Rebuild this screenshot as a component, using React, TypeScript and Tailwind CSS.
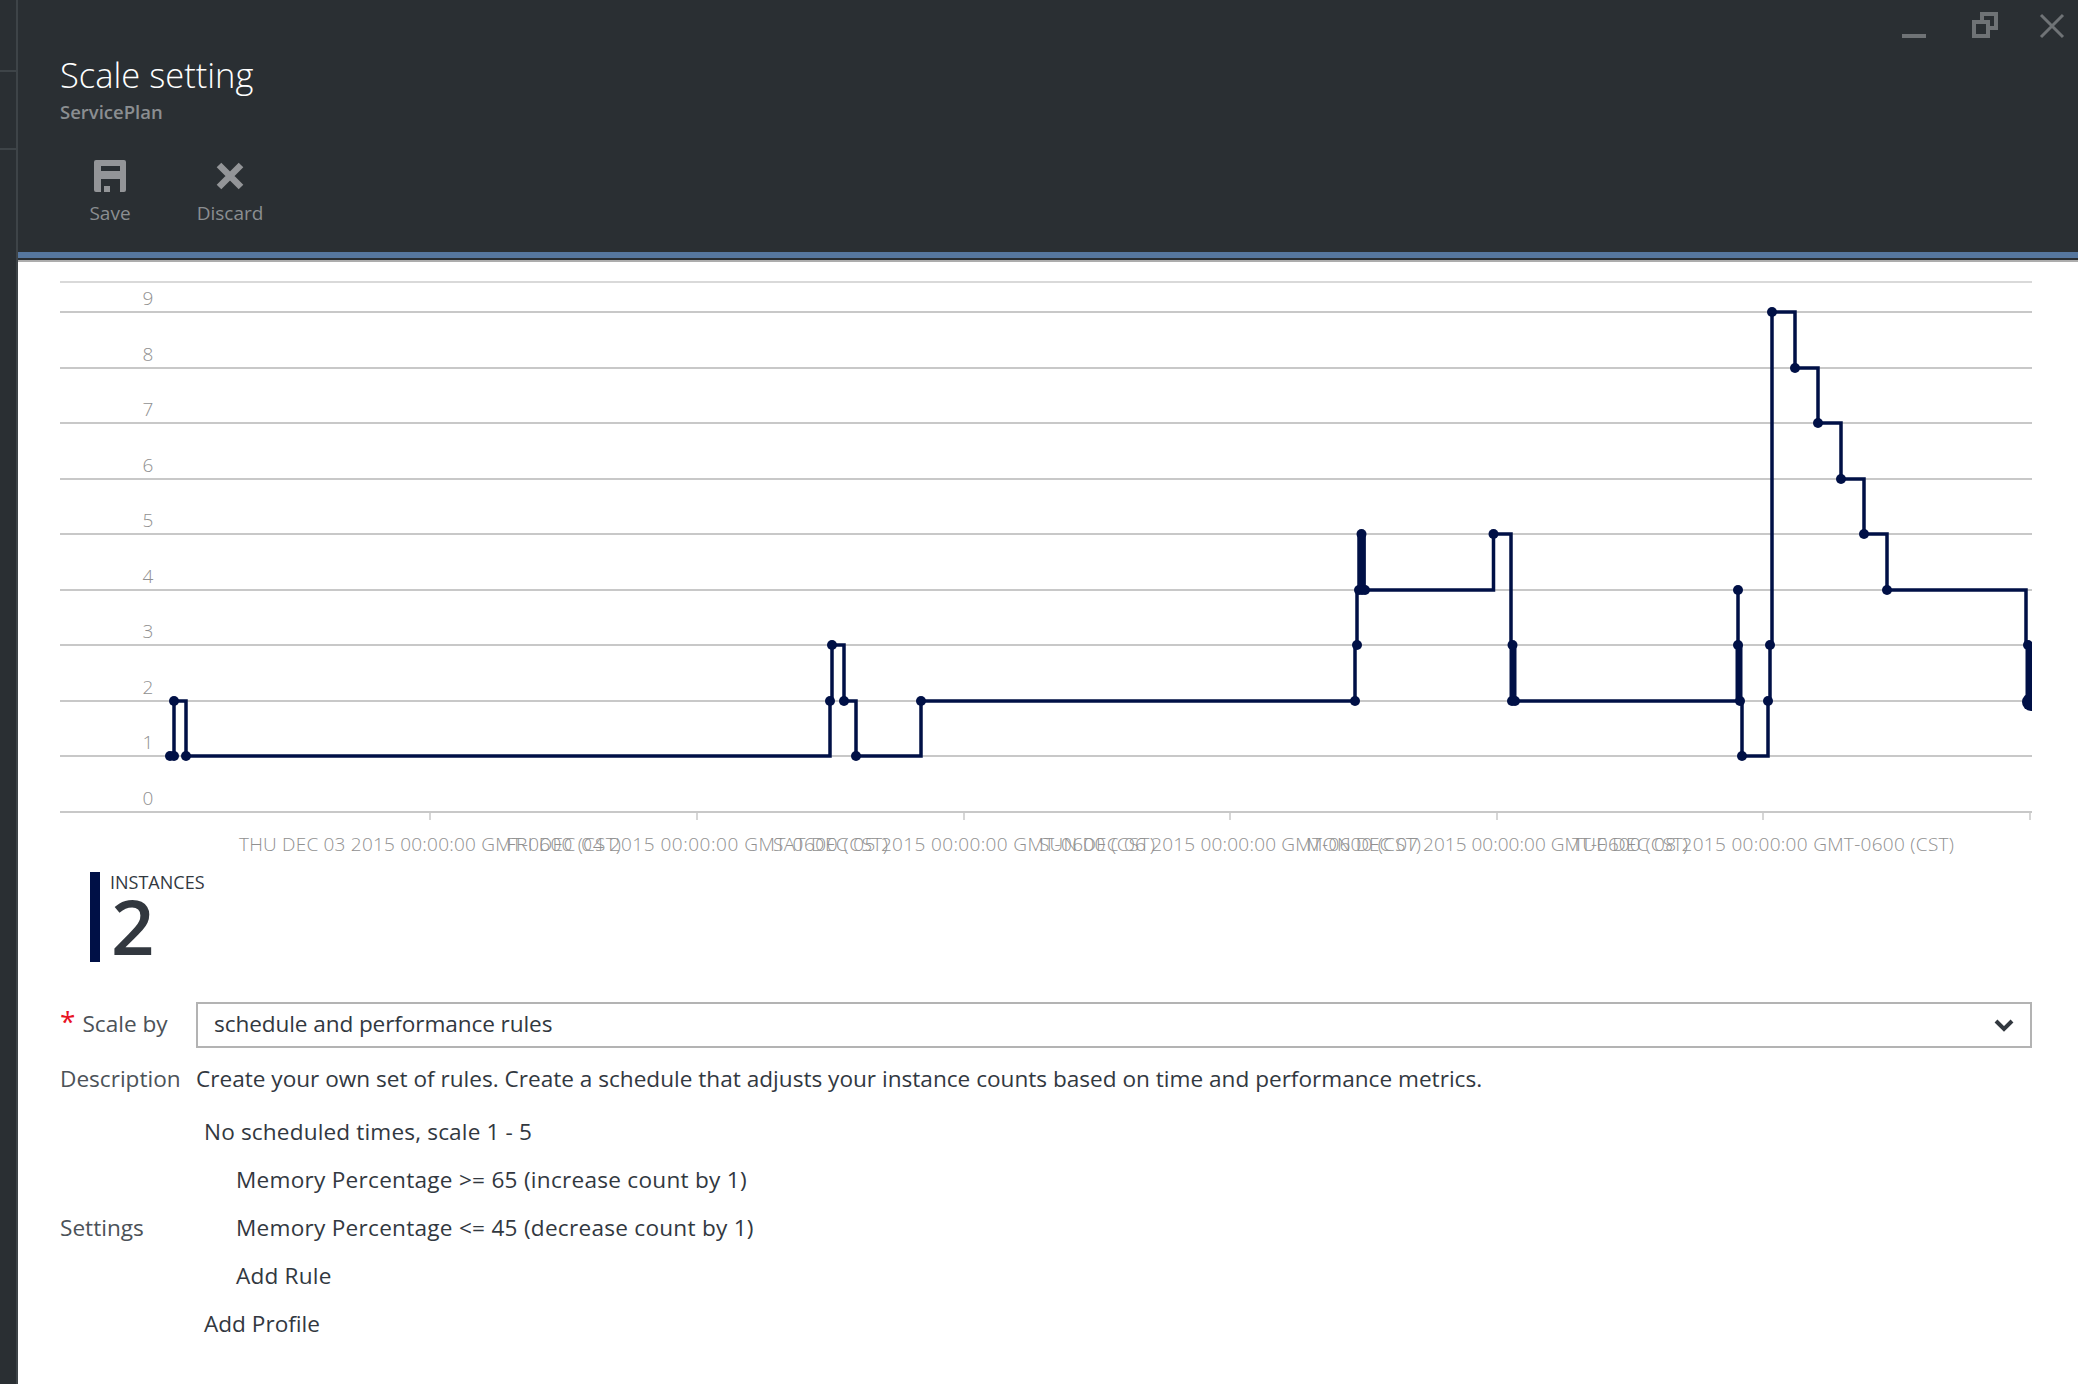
import React from 'react';

const NAVY = '#001046';
const GRID_Y = [312, 368, 423, 479, 534, 590, 645, 701, 756, 812];
const Y_LABELS = ['9', '8', '7', '6', '5', '4', '3', '2', '1', '0'];
const TICKS = [430, 697, 964, 1230, 1497, 1763, 2030];
const DATES = ['THU DEC 03', 'FRI DEC 04', 'SAT DEC 05', 'SUN DEC 06', 'MON DEC 07', 'TUE DEC 08'];

const LINE =
  'M166 756 H174 V701 H186 V756 H830 V701 H832 V645 H844 V701 H856 V756 H921 V701 H1355 V645 H1357 V590 H1359 V534 H1364 V590 H1493.5 V534 H1511 V645 H1513 V701 H1738 V590 V701 H1742 V756 H1768 V701 H1770 V645 H1772 V312 H1795 V368 H1818 V423 H1841 V479 H1864 V534 H1887 V590 H2026 V645 H2029 V701';

// bunches of samples that sit almost on top of each other
const THICK = [
  [1362, 534, 590],
  [1513, 645, 701],
  [1739, 645, 701],
  [2029, 645, 701],
];

const DOTS = [
  [170, 756], [174, 756], [174, 701], [186, 756],
  [830, 701], [832, 645], [844, 701], [856, 756], [921, 701],
  [1355, 701], [1357, 645], [1359, 590], [1362, 590], [1365, 590], [1361.5, 534],
  [1493.5, 534], [1512.5, 645], [1512, 701], [1515, 701],
  [1738, 590], [1738, 645], [1740, 701], [1742, 756],
  [1768, 701], [1770, 645], [1772, 312], [1795, 368], [1818, 423], [1841, 479], [1864, 534], [1887, 590],
  [2028, 645], [2030, 701],
];

function Chart() {
  return (
    <svg className="block w-[2060px] h-[598px] shrink-0 font-light" viewBox="18 262 2060 598">
      <defs>
        <clipPath id="plot">
          <rect x="165" y="262" width="1867" height="560" />
        </clipPath>
      </defs>
      <line x1="60" x2="2032" y1="282" y2="282" stroke="#cccccc" strokeWidth="1.5" />
      {GRID_Y.map((y, i) => (
        <g key={y}>
          <line x1="60" x2="2032" y1={y} y2={y} stroke="#c8c8c8" strokeWidth="2" />
          <text x="148" y={y - 7} textAnchor="middle" fontSize="19" fill="#909090">
            {Y_LABELS[i]}
          </text>
        </g>
      ))}
      {TICKS.map((x) => (
        <line key={x} x1={x} x2={x} y1="812" y2="820" stroke="#c8c8c8" strokeWidth="1.5" />
      ))}
      {DATES.map((d, i) => (
        <text key={d} x={TICKS[i]} y="851" textAnchor="middle" fontSize="19" fill="#909090" textLength="382">
          {d} 2015 00:00:00 GMT-0600 (CST)
        </text>
      ))}
      <g clipPath="url(#plot)">
        <path d={LINE} fill="none" stroke={NAVY} strokeWidth="3.5" />
        {THICK.map(([x, y1, y2]) => (
          <line key={x} x1={x} x2={x} y1={y1} y2={y2} stroke={NAVY} strokeWidth="7" />
        ))}
        {DOTS.map(([x, y], i) => (
          <circle key={i} cx={x} cy={y} r="5" fill={NAVY} />
        ))}
        <circle cx="2031" cy="702" r="9" fill={NAVY} />
      </g>
    </svg>
  );
}

function ToolbarButton({ label, icon }: { label: string; icon: React.ReactNode }) {
  return (
    <div className="flex flex-col items-center w-[120px]">
      <div className="h-[32px] flex items-center justify-center">{icon}</div>
      <span className="text-[19px] leading-[28px] mt-[7px] text-[#8b8e91]">{label}</span>
    </div>
  );
}

export default function App() {
  return (
    <div className="w-[2078px] h-[1384px] flex overflow-hidden bg-white font-['Open_Sans',sans-serif] text-[#32383f]">
      {/* collapsed blades on the left */}
      <div className="w-[18px] shrink-0 bg-[#2a2f33] border-r-2 border-[#3e4448]">
        <div className="h-[72px] border-b-2 border-[#3e4448]" />
        <div className="h-[78px] border-b-2 border-[#3e4448]" />
      </div>

      <div className="flex-1 min-w-0 flex flex-col">
        <header className="h-[262px] shrink-0 bg-[#2a2f33] border-b-2 border-[#adadad] relative">
          <svg className="absolute top-0 right-0" width="200" height="50" viewBox="1878 0 200 50">
            <rect x="1902" y="34" width="24" height="4" fill="#6f7376" />
            <path
              fillRule="evenodd"
              fill="#6f7376"
              d="M1980 12H1998V30H1990V38H1972V20H1980ZM1984 16V20H1990V26H1994V16ZM1976 24V34H1986V24Z"
            />
            <path d="M2041 15L2063 37M2063 15L2041 37" stroke="#6f7376" strokeWidth="3" fill="none" />
          </svg>
          <div className="h-[252px] pl-[42px] pt-[52px]">
            <h1 className="text-[34.5px] leading-[46px] font-light text-white">Scale setting</h1>
            <div className="text-[18.5px] leading-[26px] mt-[1px] font-semibold text-[#8b8e91]">ServicePlan</div>
            <div className="flex mt-[35px] ml-[-10px]">
              <ToolbarButton
                label="Save"
                icon={
                  <svg width="32" height="32" viewBox="0 0 32 32">
                    <path
                      fillRule="evenodd"
                      fill="#939598"
                      d="M2 0H30a2 2 0 0 1 2 2V30a2 2 0 0 1-2 2H2a2 2 0 0 1-2-2V2a2 2 0 0 1 2-2ZM7 6V11H26V6ZM7 19V32H10V26H16V32H26V19Z"
                    />
                  </svg>
                }
              />
              <ToolbarButton
                label="Discard"
                icon={
                  <svg width="28" height="28" viewBox="0 0 28 28">
                    <path d="M3 3L25 25M25 3L3 25" stroke="#939598" strokeWidth="6.5" fill="none" />
                  </svg>
                }
              />
            </div>
          </div>
          <div className="h-[6px] bg-[#56779f]" />
        </header>

        <Chart />

        <div className="flex mt-[12px] ml-[72px] h-[90px] shrink-0">
          <div className="w-[10px] bg-[#001046]" />
          <div className="ml-[10px]">
            <div className="text-[18px] leading-[20px]">INSTANCES</div>
            <div className="text-[76px] leading-[68px] ml-[1px] font-semibold">2</div>
          </div>
        </div>

        <div className="pl-[42px] pr-[46px] mt-[40px] text-[22.6px]">
          <div className="grid grid-cols-[136px_1fr] items-center">
            <div className="text-[#4c5258] pb-[2px]">
              <span className="text-[#e81123] text-[28px] leading-[20px] mr-[7px]">*</span>Scale by
            </div>
            <div className="h-[46px] border-2 border-[#b3b3b3] flex items-center justify-between pl-[16px] pr-[16px]">
              <span className="pb-[3px] tracking-[-0.1px]">schedule and performance rules</span>
              <svg width="20" height="14" viewBox="0 0 20 14">
                <path d="M2 3L10 11L18 3" fill="none" stroke="#32383f" strokeWidth="4" />
              </svg>
            </div>
            <div className="mt-[14px] text-[#4c5258]">Description</div>
            <div className="mt-[14px] leading-[32px]">
              Create your own set of rules. Create a schedule that adjusts your instance counts based on time and
              performance metrics.
            </div>
            <div className="mt-[12px] text-[#4c5258]">Settings</div>
            <div className="mt-[12px] leading-[48px] pl-[8px]">
              <div className="tracking-[0.15px]">No scheduled times, scale 1 - 5</div>
              <div className="pl-[32px] tracking-[0.26px]">Memory Percentage &gt;= 65 (increase count by 1)</div>
              <div className="pl-[32px] tracking-[0.26px]">Memory Percentage &lt;= 45 (decrease count by 1)</div>
              <div className="pl-[32px] tracking-[0.2px]">Add Rule</div>
              <div>Add Profile</div>
            </div>
          </div>
        </div>
      </div>
    </div>
  );
}
